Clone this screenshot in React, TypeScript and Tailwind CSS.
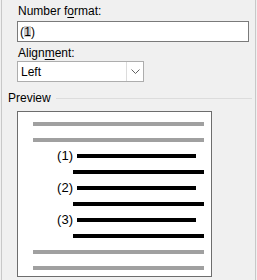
import React from "react"

const font = { fontFamily: '"Liberation Sans", Arial, sans-serif' }

const NumberedRow = ({ n }: { n: number }) => (
  <>
    <div className="flex h-[4px] items-center">
      <span className="w-[40px] text-right text-[13px] leading-[4px] text-black">
        ({n})
      </span>
      <div className="ml-[4px] h-[4px] w-[119px] bg-black" />
    </div>
    <div className="ml-[40px] h-[4px] w-[131px] bg-black" />
  </>
)

const App = () => {
  return (
    <div
      className="flex h-[280px] w-[257px] overflow-hidden bg-[#f0f0f0] text-[12px] text-black"
      style={font}
    >
      <div className="ml-[1px] flex w-[255px] flex-col border-x border-[#c8c8c8] pl-[15px]">
        <div className="ml-[1px] pt-[3px] leading-[16px]">
          Number f<span className="underline underline-offset-2">o</span>rmat:
        </div>
        <div className="mt-[2px] flex h-[21px] w-[232px] items-center border border-[#7a7a7a] bg-white pl-[2px] leading-[16px]">
          <span>(</span>
          <span className="flex h-[11px] w-[7px] items-center justify-center bg-[#cccccc]">1</span>
          <span>)</span>
        </div>
        <div className="ml-[1px] mt-[3px] leading-[16px]">
          Align<span className="underline underline-offset-2">m</span>ent:
        </div>
        <div className="flex h-[21px] w-[127px] border border-[#adadad] bg-white">
          <div className="flex flex-1 items-center pl-[3px]">Left</div>
          <div className="flex w-[17px] items-center justify-center border-l border-[#dcdcdc]">
            <svg width="9" height="5" viewBox="0 0 9 5">
              <path d="M0.5 0.5 L4.5 4.5 L8.5 0.5" fill="none" stroke="#606060" strokeWidth="1" />
            </svg>
          </div>
        </div>
        <div className="-ml-[9px] mt-[8px] flex h-[16px] items-center">
          <span className="leading-[16px]">Preview</span>
          <div className="ml-[5px] h-px w-[196px] bg-[#dcdcdc]" />
        </div>
        <div className="mt-[5px] flex h-[166px] w-[195px] flex-col gap-[12px] border border-[#6d6d6d] bg-white pl-[15px] pt-[10px]">
          <div className="h-[4px] w-[171px] bg-[#a0a0a0]" />
          <div className="h-[4px] w-[171px] bg-[#a0a0a0]" />
          <NumberedRow n={1} />
          <NumberedRow n={2} />
          <NumberedRow n={3} />
          <div className="h-[4px] w-[171px] bg-[#a0a0a0]" />
          <div className="h-[4px] w-[171px] bg-[#a0a0a0]" />
        </div>
      </div>
    </div>
  )
}

export default App
